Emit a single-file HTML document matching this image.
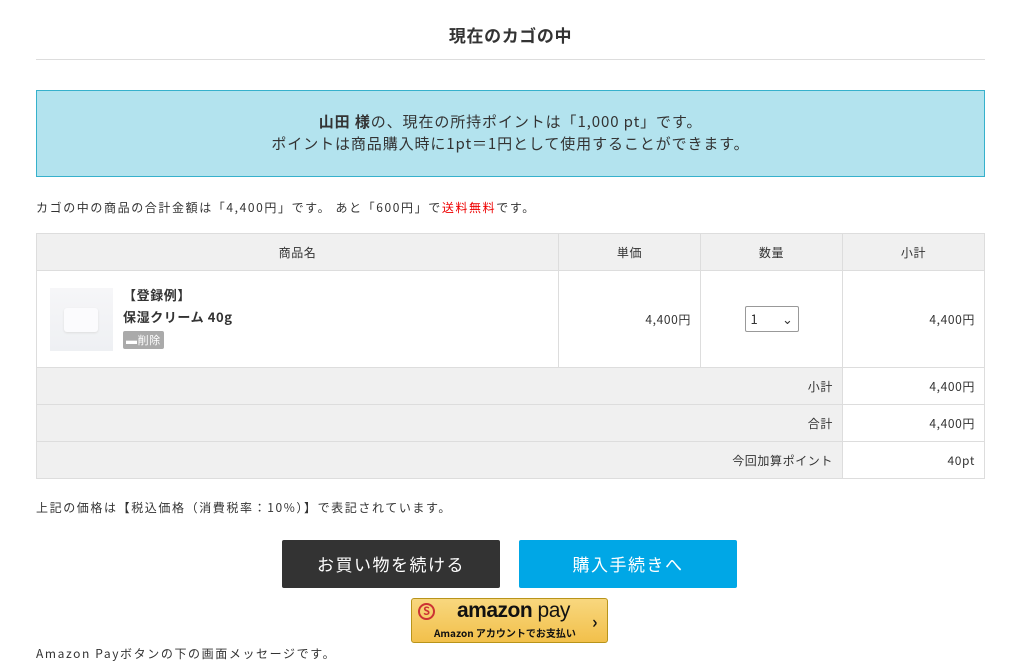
<!DOCTYPE html>
<html><head><meta charset="utf-8"><style>
body{margin:0;background:#fff;font-family:"Noto Sans CJK JP",sans-serif;color:#333;width:1024px;height:670px;overflow:hidden;position:relative;letter-spacing:0.6px}
.a{position:absolute}
h1{position:absolute;left:36px;top:0;width:949px;margin:0;height:59px;line-height:70px;text-align:center;font-size:17px;font-weight:bold;border-bottom:1px solid #ddd;color:#333}
.info{left:36px;top:90px;width:947px;height:85px;background:#b3e3ee;border:1px solid #36b1cc;text-align:center;font-size:15px;line-height:22px;box-sizing:content-box;letter-spacing:0.9px}
.s{font-size:12px;letter-spacing:1.6px}
table{position:absolute;left:36px;top:233px;width:949px;border-collapse:collapse;font-size:12px}
td,th{border:1px solid #ddd;padding:0 9px;font-weight:normal}
th{background:#f0f0f0;height:36px;text-align:center}
.g{background:#f0f0f0;text-align:right}
.r{text-align:right}
.btn{position:absolute;top:540px;width:218px;height:48px;line-height:48px;text-align:center;color:#fff;font-size:17px;border-radius:2px;letter-spacing:1.5px}
</style></head><body>
<h1>現在のカゴの中</h1>
<div class="a info"><div style="padding-top:20px"><b>山田 様</b>の、現在の所持ポイントは「1,000 pt」です。<br>ポイントは商品購入時に1pt＝1円として使用することができます。</div></div>
<div class="a s" style="left:36px;top:199px">カゴの中の商品の合計金額は「4,400円」です。 あと「600円」で<span style="color:#e00">送料無料</span>です。</div>
<table>
<tr><th style="width:503px">商品名</th><th style="width:123px">単価</th><th style="width:123px">数量</th><th>小計</th></tr>
<tr style="height:97px"><td><div style="display:flex;align-items:center"><div style="width:63px;height:63px;background:linear-gradient(#f6f6f8,#eef0f3);margin-right:10px;position:relative;margin-left:4px"><div style="position:absolute;left:14px;top:20px;width:34px;height:24px;background:#fbfbfd;border-radius:3px;box-shadow:0 1px 2px #ddd"></div></div><div style="font-size:13px;font-weight:bold;line-height:22px;margin-top:-4px">【登録例】<br>保湿クリーム 40g<br><span style="background:#aaa;color:#fff;font-size:11px;font-weight:normal;padding:1px 3px;border-radius:2px">▬削除</span></div></div></td><td class="r">4,400円</td><td style="text-align:center"><span style="display:inline-block;width:54px;height:26px;border:1px solid #999;border-radius:2px;text-align:left;line-height:24px;padding-left:5px;box-sizing:border-box;font-size:13px">1 <span style="float:right;margin-right:4px">⌄</span></span></td><td class="r">4,400円</td></tr>
<tr style="height:37px"><td class="g" colspan="3">小計</td><td class="r">4,400円</td></tr>
<tr style="height:37px"><td class="g" colspan="3">合計</td><td class="r">4,400円</td></tr>
<tr style="height:37px"><td class="g" colspan="3">今回加算ポイント</td><td class="r">40pt</td></tr>
</table>
<div class="a s" style="left:36px;top:499px">上記の価格は【税込価格（消費税率：10%）】で表記されています。</div>
<div class="btn" style="left:282px;background:#333">お買い物を続ける</div>
<div class="btn" style="left:519px;background:#00a7e6">購入手続きへ</div>
<div class="a" style="left:411px;top:598px;width:197px;height:45px;border:1px solid #b8941a;border-radius:3px;background:linear-gradient(#f8d77e,#f2c04b);box-sizing:border-box;letter-spacing:0">
<div class="a" style="left:6px;top:4px;width:17px;height:17px;border:2px solid #c33;border-radius:50%;box-sizing:border-box;color:#c33;font-size:11px;line-height:13px;text-align:center;font-weight:bold">S</div>
<div class="a" style="left:45px;top:0px;font-size:21px;line-height:24px;font-weight:bold;color:#111;font-family:'Liberation Sans',sans-serif;letter-spacing:-0.5px">amazon <span style="font-weight:normal">pay</span></div>
<div class="a" style="left:22px;top:26px;font-size:10px;color:#111;font-weight:bold">Amazon アカウントでお支払い</div>
<div class="a" style="left:180px;top:9px;font-size:17px;font-weight:bold;color:#111">›</div>
</div>
<div class="a s" style="left:36px;top:645px">Amazon Payボタンの下の画面メッセージです。</div>
</body></html>
